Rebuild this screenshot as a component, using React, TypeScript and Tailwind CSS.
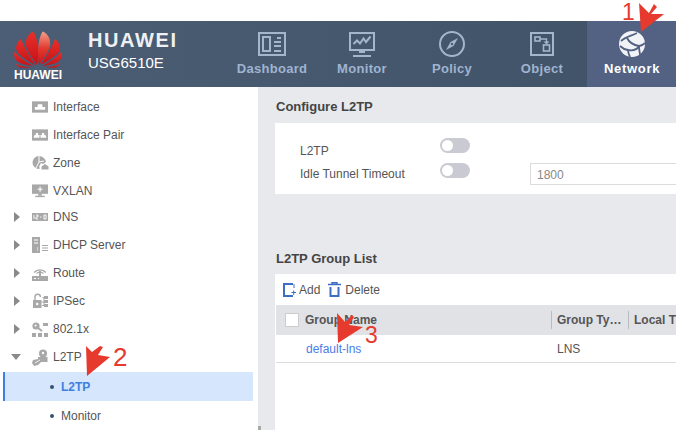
import type { ReactNode } from "react";

const FONT = { fontFamily: '"Liberation Sans", Arial, sans-serif' };

function HuaweiLogo() {
  const petals = [
    "M25 34C23 24 23.5 9 28.5 0.5C33.5 2 37 8 36 14.5C35 20.5 28 30 25 34Z",
    "M26.5 34C31 28 37 18 41 8C45.5 11.5 47 16 45 20.5C43 24.5 32 31.5 26.5 34Z",
    "M28 35C34 32.5 42 27 47.5 20.5C48.5 24.5 47.5 28 44.5 30.5C41 33 33 34.5 28 35Z",
    "M30.5 36C36 36.2 42 35.2 46.5 32.5C45.5 35 42.5 36.8 39 36.8C36 36.8 33 36.6 30.5 36Z",
  ];
  return (
    <svg width="48" height="37" viewBox="0 0 48 37">
      <defs>
        <linearGradient id="petal" x1="0" y1="0" x2="0" y2="1">
          <stop offset="0" stopColor="#f2a08c" />
          <stop offset="0.5" stopColor="#e23a30" />
          <stop offset="1" stopColor="#c8141a" />
        </linearGradient>
        <linearGradient id="petal2" x1="0" y1="0" x2="0" y2="1">
          <stop offset="0" stopColor="#ea2f28" />
          <stop offset="1" stopColor="#c4121a" />
        </linearGradient>
      </defs>
      {petals.map((d, i) => (
        <g key={d}>
          <path d={d} fill={i === 0 ? "url(#petal)" : "url(#petal2)"} />
          <path d={d} fill="url(#petal2)" transform="matrix(-1 0 0 1 48 0)" />
        </g>
      ))}
    </svg>
  );
}

function DashboardIcon() {
  return (
    <svg width="28" height="24" viewBox="0 0 28 24" fill="none" stroke="#a3b6cc" strokeWidth="2">
      <rect x="1" y="1" width="26" height="22" />
      <rect x="5" y="5" width="7" height="14" />
      <path d="M19 6h4M16 10h7M16 14h7M16 19h7" />
    </svg>
  );
}

function MonitorIcon() {
  return (
    <svg width="26" height="25" viewBox="0 0 26 25" fill="none" stroke="#a3b6cc" strokeWidth="2">
      <rect x="1" y="1" width="24" height="17" />
      <path d="M4.5 12l3.5-3.5 3 3 3.5-5 2.5 3.5 4.5-5.5" />
      <path d="M10 20h6M4 24h18" />
    </svg>
  );
}

function PolicyIcon() {
  return (
    <svg width="26" height="26" viewBox="0 0 26 26" fill="none">
      <circle cx="13" cy="13" r="12" stroke="#a3b6cc" strokeWidth="2" />
      <path d="M19 7l-4.5 8L7 19l4.5-8z" fill="#a3b6cc" />
      <circle cx="13" cy="13" r="1.2" fill="#4a5d73" />
    </svg>
  );
}

function ObjectIcon() {
  return (
    <svg width="24" height="24" viewBox="0 0 24 24" fill="none" stroke="#a3b6cc" strokeWidth="2">
      <rect x="1" y="1" width="22" height="22" />
      <rect x="5" y="5" width="5" height="4" strokeWidth="1.6" />
      <path d="M10 7h6.5v3" strokeWidth="1.4" />
      <path d="M13.5 9.5h6l-3 3z" fill="#a3b6cc" stroke="none" />
      <rect x="13.5" y="13" width="6" height="6" strokeWidth="1.6" />
    </svg>
  );
}

function NetworkIcon() {
  return (
    <svg width="26" height="26" viewBox="0 0 26 26">
      <circle cx="13" cy="13" r="13" fill="#f2f3f6" />
      <g fill="none" stroke="#536182" strokeWidth="1.8">
        <path d="M2 10C6 6 12 5 18 2" />
        <path d="M8 7C10 11 14 14 20 15C22 15 24 14 26 12" />
        <path d="M20 15C18 19 15 20 9 19C6 18.5 3 17 1 15" />
        <path d="M20 15C20 19 21 22 21 24" />
        <path d="M9 19C9 22 10 24 11 26" />
      </g>
    </svg>
  );
}

const NAV = [
  { label: "Dashboard", icon: <DashboardIcon /> },
  { label: "Monitor", icon: <MonitorIcon /> },
  { label: "Policy", icon: <PolicyIcon /> },
  { label: "Object", icon: <ObjectIcon /> },
];

function SideIcon({ name }: { name: string }) {
  const fill = "#a8a8a8";
  if (name === "interface")
    return (
      <svg width="16" height="12" viewBox="0 0 17 12">
        <rect width="17" height="12" fill={fill} />
        <path d="M3 9V6h3V3h5v3h3v3z" fill="#fff" />
      </svg>
    );
  if (name === "pair")
    return (
      <svg width="16" height="12" viewBox="0 0 17 12">
        <rect width="17" height="12" fill={fill} />
        <path d="M2 9V6.5l2-.5V4h2.5v2H8v3zM9 9V6h1.5V4H13v2l2 .5V9z" fill="#fff" />
      </svg>
    );
  if (name === "zone")
    return (
      <svg width="17" height="16" viewBox="0 0 17 16">
        <path d="M7 1A6.5 6.5 0 1 0 7 14l1-1-1-1 2-4 2 1 3-2A7 7 0 0 0 7 1z" fill={fill} />
        <path d="M7 1v6l-3 6M7 7l5-1" stroke="#fff" strokeWidth="1" fill="none" />
        <path d="M13 9l3.5 2.5v3h-7v-3z" fill={fill} />
      </svg>
    );
  if (name === "vxlan")
    return (
      <svg width="16" height="15" viewBox="0 0 17 15">
        <rect width="17" height="10" fill={fill} />
        <path d="M8 2.5h1.2V4.5h2v1.2h-2v2H8v-2H6V4.5h2z" fill="#fff" />
        <rect x="6.5" y="10" width="4" height="2" fill={fill} />
        <rect x="3.5" y="12" width="10" height="1.5" fill={fill} />
      </svg>
    );
  if (name === "dns")
    return (
      <svg width="16" height="8" viewBox="0 0 16 8">
        <rect width="16" height="8" fill={fill} />
        <path d="M2 2v4M4 2h2v2H4v2h2M8 4h1.4M12 2h2v4h-2z" stroke="#fff" strokeWidth="0.9" fill="none" />
      </svg>
    );
  if (name === "dhcp")
    return (
      <svg width="16" height="16" viewBox="0 0 16 16">
        <path d="M0 0h8v16H0z" fill={fill} />
        <path d="M2 3h4M2 6h4M5 11h1M5 13h1" stroke="#fff" strokeWidth="1" />
        <path d="M10 8.5h6M10 11h6M10 13.5h6" stroke={fill} strokeWidth="1.2" />
      </svg>
    );
  if (name === "route")
    return (
      <svg width="16" height="15" viewBox="0 0 16 15" fill="none" stroke={fill}>
        <path d="M2 6.5a8 8 0 0 1 12 0M4.5 7.5a5 5 0 0 1 7 0" strokeWidth="1.2" />
        <rect x="7" y="5" width="2" height="5" fill={fill} stroke="none" />
        <rect x="0" y="10" width="16" height="5" fill={fill} stroke="none" />
        <path d="M2 12.5h2M6 12.5h1" stroke="#fff" />
      </svg>
    );
  if (name === "ipsec")
    return (
      <svg width="16" height="16" viewBox="0 0 16 16">
        <path d="M3 7V4a2.7 2.7 0 0 1 5.4 0" stroke={fill} strokeWidth="1.4" fill="none" />
        <rect x="1" y="7" width="8.5" height="8" fill={fill} />
        <circle cx="5.2" cy="11" r="1.2" fill="#fff" />
        <path d="M12 3h4v3h-4zM12 7h4v3h-4zM12 11h4v3h-4z" fill={fill} />
        <path d="M9.5 9h2.5M10.5 4.5h1.5v8H10" stroke={fill} fill="none" />
      </svg>
    );
  if (name === "dot1x")
    return (
      <svg width="16" height="15" viewBox="0 0 16 15">
        <circle cx="4" cy="4" r="3.6" fill={fill} />
        <circle cx="3.6" cy="3.6" r="1" fill="#fff" />
        <path d="M6 6l4 3" stroke={fill} strokeWidth="2" />
        <path d="M11 1h5v3h-5zM8 4l3-1" fill={fill} />
        <path d="M0 11h4v4H0zM6 11h4v4H6zM12 11h4v4h-4z" fill={fill} />
      </svg>
    );
  return (
    <svg width="17" height="17" viewBox="0 0 17 17">
      <circle cx="11" cy="4.5" r="4" fill={fill} />
      <path d="M6 8h9.5v5H9l-3 3-4 1-2-3 1-3 5-1z" fill={fill} />
      <circle cx="11" cy="4" r="1.2" fill="#fff" />
      <path d="M3 14l5-3" stroke="#fff" strokeWidth="0.8" />
    </svg>
  );
}

function Caret({ open }: { open?: boolean }) {
  if (open)
    return <span className="w-0 h-0 border-x-[5px] border-x-transparent border-t-[6px] border-t-[#8a8a8a]" />;
  return <span className="w-0 h-0 ml-[2px] border-y-[5px] border-y-transparent border-l-[6px] border-l-[#8a8a8a]" />;
}

function MenuRow({ icon, label, caret }: { icon: string; label: string; caret?: "closed" | "open" }) {
  return (
    <div className="h-[28px] flex items-center text-[12px] text-[#555]">
      <span className="w-[32px] flex justify-center">
        {caret && <Caret open={caret === "open"} />}
      </span>
      <span className="w-[21px] flex items-center">
        <SideIcon name={icon} />
      </span>
      {label}
    </div>
  );
}

function Toggle() {
  return (
    <span className="w-[30px] h-[15px] rounded-full bg-[#cacbd2] flex items-center pl-[2px]">
      <span className="w-[11px] h-[11px] rounded-full bg-white" />
    </span>
  );
}

function Arrow({ className, points, children }: { className: string; points: string; children?: ReactNode }) {
  return (
    <svg className={`absolute ${className}`} width="32" height="36" viewBox="0 0 32 36">
      <polygon points={points} fill="#e53a2d" />
      {children}
    </svg>
  );
}

export default function App() {
  return (
    <div className="relative w-[676px] h-[430px] overflow-hidden bg-white flex flex-col" style={FONT}>
      <div className="h-[21px] shrink-0" />

      {/* Top bar */}
      <header className="h-[66px] shrink-0 flex bg-gradient-to-r from-[#4b5e75] to-[#3f5266] overflow-hidden">
        <div className="w-[74px] pl-[14px] flex flex-col pt-[10px] shrink-0">
          <HuaweiLogo />
          <span className="text-[12px] leading-[12px] font-bold text-white w-[48px] whitespace-nowrap mt-[1px]">
            HUAWEI
          </span>
        </div>
        <div className="w-[153px] pl-[14px] shrink-0 text-white">
          <div className="text-[20px] font-bold leading-[20px] mt-[9px] tracking-[1.6px] text-[#eef0f3]">HUAWEI</div>
          <div className="text-[15px] leading-[16px] mt-[5px]">USG6510E</div>
        </div>
        {NAV.map((item) => (
          <div key={item.label} className="w-[90px] shrink-0 flex flex-col items-center">
            <div className="h-[26px] mt-[10px] flex items-center">{item.icon}</div>
            <div className="text-[13px] font-bold leading-[16px] mt-[4px] text-[#a0b3d0] tracking-[0.3px]">
              {item.label}
            </div>
          </div>
        ))}
        <div className="w-[90px] shrink-0 flex flex-col items-center bg-[#536182]">
          <div className="h-[26px] mt-[10px] flex items-center">
            <NetworkIcon />
          </div>
          <div className="text-[13px] font-bold leading-[16px] mt-[4px] text-white tracking-[0.7px]">Network</div>
        </div>
      </header>

      <div className="flex-1 flex min-h-0">
        {/* Sidebar */}
        <aside className="w-[258px] shrink-0 pt-[6px] relative">
          <MenuRow icon="interface" label="Interface" />
          <MenuRow icon="pair" label="Interface Pair" />
          <MenuRow icon="zone" label="Zone" />
          <MenuRow icon="vxlan" label="VXLAN" />
          <div className="-mt-[2px]">
            <MenuRow icon="dns" label="DNS" caret="closed" />
            <MenuRow icon="dhcp" label="DHCP Server" caret="closed" />
            <MenuRow icon="route" label="Route" caret="closed" />
            <MenuRow icon="ipsec" label="IPSec" caret="closed" />
            <MenuRow icon="dot1x" label="802.1x" caret="closed" />
            <MenuRow icon="l2tp" label="L2TP" caret="open" />
          </div>
          <div className="ml-[3px] mr-[5px] mt-[1px] h-[29px] flex items-center bg-[#d6e6fc] border-l-[2px] border-[#3f7fe0] text-[12px] font-bold text-[#3f7fe0] pl-[45px]">
            <span className="w-[4px] h-[4px] rounded-full bg-[#3a5070] mr-[7px]" />
            L2TP
          </div>
          <div className="ml-[5px] h-[29px] flex items-center text-[12px] text-[#555] pl-[45px]">
            <span className="w-[4px] h-[4px] rounded-full bg-[#3a5070] mr-[7px]" />
            Monitor
          </div>
        </aside>

        {/* Main */}
        <main className="flex-1 min-w-0 overflow-hidden bg-[#e8e9ed] pl-[17px] text-[12px] text-[#555]">
          <h2 className="h-[36px] pt-[12px] pl-[1px] text-[13px] leading-[16px] font-bold text-[#444]">Configure L2TP</h2>
          <section className="h-[71px] bg-white pl-[25px] pt-[15px]">
            <div className="flex">
              <div className="w-[140px] shrink-0 pt-[5px]">
                <div className="h-[23px] leading-[16px]">L2TP</div>
                <div className="leading-[16px] whitespace-nowrap">Idle Tunnel Timeout</div>
              </div>
              <div className="w-[90px] shrink-0 flex flex-col gap-[10px]">
                <Toggle />
                <Toggle />
              </div>
              <div className="pt-[25px] shrink-0">
                <div className="w-[300px] h-[22px] border border-[#dcdcdc] pl-[6px] pt-[1px] flex items-center text-[#888]">1800</div>
              </div>
            </div>
          </section>

          <h2 className="h-[80px] pt-[57px] pl-[1px] text-[13px] leading-[16px] font-bold text-[#444]">L2TP Group List</h2>
          <section className="bg-white h-[156px]">
            <div className="h-[31px] flex items-center pl-[8px]">
              <svg width="13" height="14" viewBox="0 0 13 14" fill="none" stroke="#3b6ec4" strokeWidth="2" className="mr-[3px]">
                <path d="M10 1H1v12h9" />
                <path d="M11 1v4M8.5 9.5h4.5M10.7 7.5v4.5" strokeWidth="1" />
              </svg>
              <span>Add</span>
              <svg width="13" height="15" viewBox="0 0 13 15" fill="none" stroke="#3b6ec4" className="ml-[8px] mr-[4px]">
                <path d="M0 2.5h13M4 2.5V.7h5v1.8" strokeWidth="1.4" />
                <path d="M2.5 5v9h8V5" strokeWidth="2" />
              </svg>
              Delete
            </div>
            <div className="ml-[1px] h-[30px] bg-[#e1e2e6] flex items-center font-bold text-[#555]">
              <span className="w-[14px] h-[14px] ml-[9px] mr-[6px] bg-white border border-[#ccc] shrink-0" />
              <span className="w-[246px]">Group Name</span>
              <span className="w-[1px] h-[18px] bg-[#b9bbc0]" />
              <span className="w-[76px] pl-[5px] whitespace-nowrap">Group Ty…</span>
              <span className="w-[1px] h-[18px] bg-[#b9bbc0]" />
              <span className="pl-[5px] whitespace-nowrap">Local T</span>
            </div>
            <div className="ml-[1px] h-[28px] flex items-center border-b border-[#dddddd]">
              <span className="w-[30px]" />
              <span className="w-[251px] text-[#4a7de6]">default-lns</span>
              <span>LNS</span>
            </div>
          </section>
        </main>
      </div>

      {/* Annotations */}
      <span className="absolute left-[258px] top-[426px] w-[3px] h-[4px] bg-[#a9a9a9]" />
      <Arrow className="left-[636px] top-0" points="5,32 3,3 13,13 18,4 21,7 15,14 28,14" />
      <span className="absolute left-[622px] top-[2px] text-[23px] leading-[20px] text-[#e53a2d]">1</span>
      <Arrow className="left-[83px] top-[344px]" points="4,32 3,2 9,8 17,2 20,3 15,11 27,13" />
      <span className="absolute left-[113px] top-[345px] text-[26px] leading-[24px] text-[#e53a2d]">2</span>
      <Arrow className="left-[334px] top-[312px]" points="4,31 3,1 11,10 18,3 20,5 15,13 29,15" />
      <span className="absolute left-[365px] top-[325px] text-[23px] leading-[20px] text-[#e53a2d]">3</span>
    </div>
  );
}
